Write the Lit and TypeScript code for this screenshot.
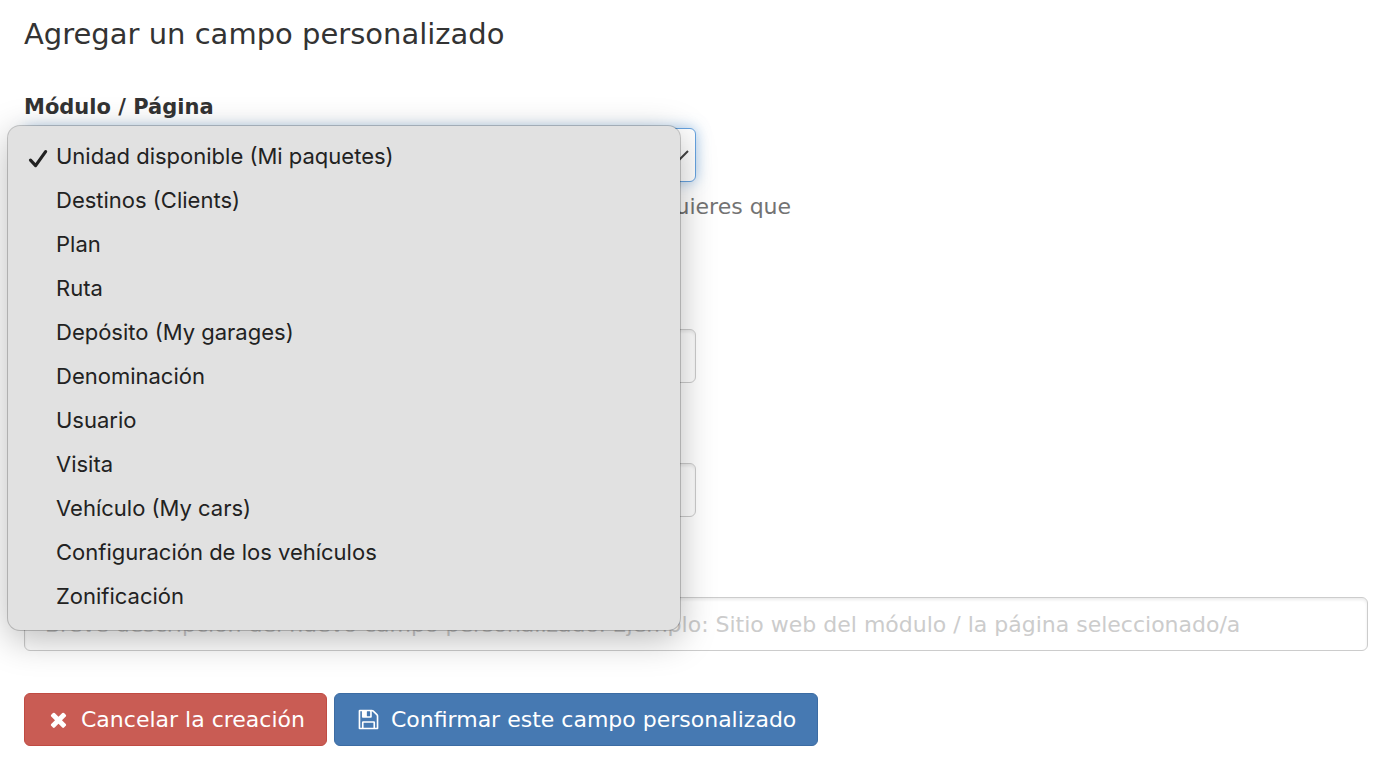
import { LitElement, html, css } from "lit";
import { customElement, state } from "lit/decorators.js";

const MODULES = [
  "Unidad disponible (Mi paquetes)",
  "Destinos (Clients)",
  "Plan",
  "Ruta",
  "Depósito (My garages)",
  "Denominación",
  "Usuario",
  "Visita",
  "Vehículo (My cars)",
  "Configuración de los vehículos",
  "Zonificación",
];

@customElement("app-root")
export class AppRoot extends LitElement {
  @state() private selected = 0;
  @state() private open = true;

  static styles = css`
    :host {
      display: block;
      color: #333;
      background: #fff;
      font-family: Verdana, "DejaVu Sans", sans-serif;
      font-size: 22px;
      line-height: 32px;
    }
    *, *::before, *::after { box-sizing: border-box; }
    .page { padding: 14px 32px 18px 24px; }
    .title { margin: 0 0 36px; font-size: 29px; line-height: 40px; font-weight: 400; }
    .form { display: flex; flex-direction: column; gap: 42px; }
    .field { display: flex; flex-direction: column; align-items: flex-start; gap: 4px; }
    .label { font-size: 21px; line-height: 34px; font-weight: 700; }
    .control {
      display: block;
      width: 100%;
      height: 54px;
      margin: 0;
      padding: 0 20px;
      border: 1px solid #ccc;
      border-radius: 6px;
      background: #fff;
      box-shadow: inset 0 2px 3px rgba(0, 0, 0, 0.08);
      color: #555;
      font: inherit;
      outline: none;
      appearance: none;
    }
    .control::placeholder { color: #ccc; opacity: 1; }
    .half { width: 50%; }
    .picker { position: relative; }
    .focused { border-color: #66a3e0; box-shadow: 0 0 14px rgba(102, 163, 224, 0.6); }
    .chevron { position: absolute; right: 7px; top: 21px; width: 18px; height: 12px; pointer-events: none; }
    .menu {
      position: absolute;
      z-index: 2;
      top: -2px;
      left: -16px;
      width: 100%;
      margin: 0;
      padding: 8px 0 12px;
      list-style: none;
      border-radius: 12px;
      background: #e1e1e1;
      box-shadow: 0 0 0 1px rgba(0, 0, 0, 0.2), 0 9px 36px rgba(0, 0, 0, 0.28);
    }
    .option {
      display: flex;
      align-items: center;
      height: 44px;
      padding: 0 20px;
      color: #222;
      font-family: Inter, sans-serif;
      cursor: default;
    }
    .mark { display: flex; flex: none; width: 28px; padding-top: 6px; }
    .tick { width: 20px; height: 20px; }
    .help { margin: 7px 0 0; color: #737373; line-height: 28px; white-space: nowrap; }
    .actions { display: flex; flex-wrap: wrap; gap: 7px; }
    .button {
      display: flex;
      align-items: center;
      gap: 11px;
      height: 53px;
      margin: 0;
      padding: 0 21px 0 22px;
      border: 1px solid;
      border-radius: 6px;
      color: #fff;
      font: inherit;
    }
    .cancel { background: #c95c54; border-color: #c04b43; }
    .confirm { background: #4679b2; border-color: #3c6ca3; }
    .glyph { width: 23px; height: 23px; fill: currentColor; }
  `;

  private choose(index: number) {
    this.selected = index;
    this.open = false;
  }

  private renderMenu() {
    return html`<ul class="menu" role="listbox" aria-labelledby="module-label">
      ${MODULES.map(
        (name, i) => html`<li class="option" role="option" aria-selected=${i === this.selected} @click=${() => this.choose(i)}>
          <span class="mark">${i === this.selected
            ? html`<svg class="tick" viewBox="0 0 20 20" aria-hidden="true">
                <path d="M2.5 11.2 7.6 16.6 17.6 2.6" fill="none" stroke="#222" stroke-width="3.2" stroke-linecap="round" stroke-linejoin="round" />
              </svg>`
            : ""}</span>
          <span>${name}</span>
        </li>`,
      )}
    </ul>`;
  }

  render() {
    return html`
      <main class="page">
        <h1 class="title">Agregar un campo personalizado</h1>
        <form class="form" @submit=${(e: Event) => e.preventDefault()}>
          <div class="field">
            <label class="label" id="module-label" for="module">Módulo / Página</label>
            <div class="picker half">
              <select class="control focused" id="module" .value=${MODULES[this.selected]}
                @mousedown=${(e: Event) => { e.preventDefault(); this.open = !this.open; }}>
                ${MODULES.map((name) => html`<option>${name}</option>`)}
              </select>
              <svg class="chevron" viewBox="0 0 18 12" aria-hidden="true">
                <path d="M1 2 9 10 17 2" fill="none" stroke="#444" stroke-width="2" />
              </svg>
              ${this.open ? this.renderMenu() : ""}
            </div>
            <p class="help">Por favor selecciona aquí el módulo o la página en la que quieres que<br />aparezca el campo</p>
          </div>
          <div class="field">
            <label class="label" for="name">Nombre</label>
            <input class="control half" id="name" type="text" />
          </div>
          <div class="field">
            <label class="label" for="kind">Tipo</label>
            <input class="control half" id="kind" type="text" />
          </div>
          <div class="field">
            <label class="label" for="description">Descripción</label>
            <input class="control" id="description" type="text"
              placeholder="Breve descripción del nuevo campo personalizado. Ejemplo: Sitio web del módulo / la página seleccionado/a" />
          </div>
          <div class="actions">
            <button class="button cancel" type="button">
              <svg class="glyph" viewBox="0 0 1792 1792" aria-hidden="true"><path d="M1490 1322q0 40-28 68l-136 136q-28 28-68 28t-68-28l-294-294-294 294q-28 28-68 28t-68-28l-136-136q-28-28-28-68t28-68l294-294-294-294q-28-28-28-68t28-68l136-136q28-28 68-28t68 28l294 294 294-294q28-28 68-28t68 28l136 136q28 28 28 68t-28 68l-294 294 294 294q28 28 28 68z" /></svg>
              <span>Cancelar la creación</span>
            </button>
            <button class="button confirm" type="submit">
              <svg class="glyph" viewBox="0 0 1792 1792" aria-hidden="true"><path d="M512 1536h768v-384h-768v384zm896 0h128v-896q0-14-10-38.500t-20-34.500l-281-281q-10-10-34-20t-39-10v416q0 40-28 68t-68 28h-576q-40 0-68-28t-28-68v-416h-128v1280h128v-416q0-40 28-68t68-28h832q40 0 68 28t28 68v416zm-384-928v-320q0-13-9.500-22.500t-22.500-9.500h-192q-13 0-22.500 9.500t-9.500 22.500v320q0 13 9.500 22.500t22.500 9.500h192q13 0 22.500-9.500t9.500-22.500zm640 32v928q0 40-28 68t-68 28h-1344q-40 0-68-28t-28-68v-1344q0-40 28-68t68-28h928q40 0 88 20t76 48l280 280q28 28 48 76t20 88z" /></svg>
              <span>Confirmar este campo personalizado</span>
            </button>
          </div>
        </form>
      </main>
    `;
  }
}
